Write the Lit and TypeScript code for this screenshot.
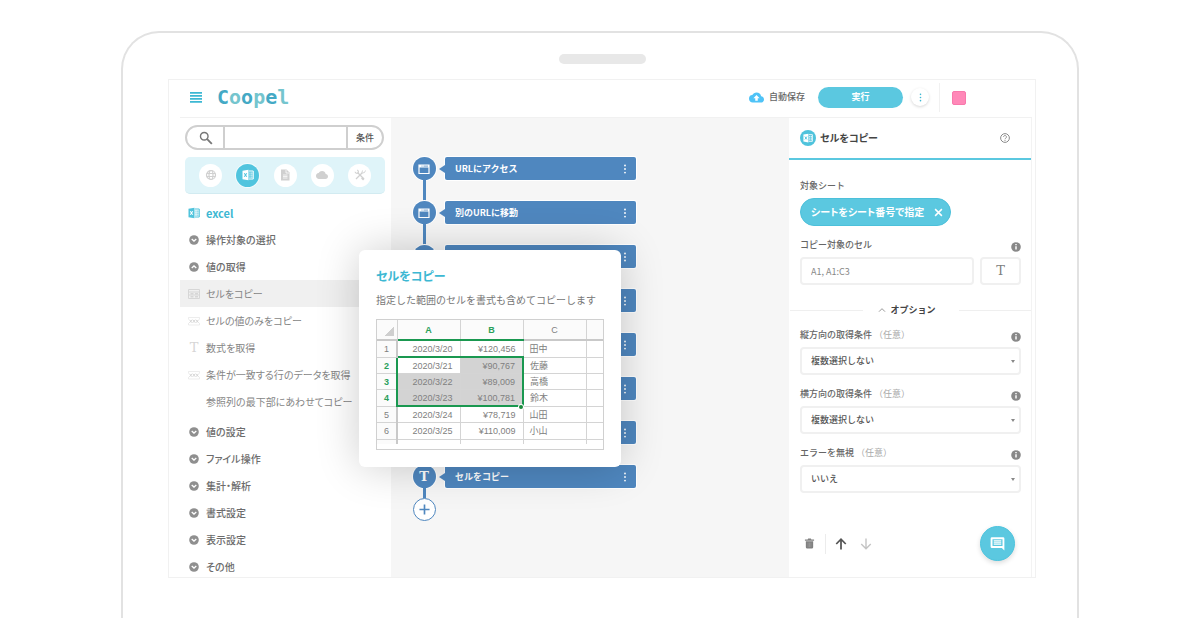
import { LitElement, html, css, svg, nothing } from "lit";
import { customElement, property } from "lit/decorators.js";
import { classMap } from "lit/directives/class-map.js";

const paths: Record<string, unknown> = {
  menu: svg`<path d="M0 2h24v3.500H0zM0 8h24v3.500H0zM0 14h24v3.500H0zM0 20h24v3.500H0z"/>`,
  search: svg`<circle cx="9" cy="9" r="6.5" fill="none" stroke="currentColor" stroke-width="2.4"/><path d="M14 14l8 8" stroke="currentColor" stroke-width="3.2"/>`,
  globe: svg`<g fill="none" stroke="currentColor" stroke-width="2.400"><circle cx="12" cy="12" r="9"/><ellipse cx="12" cy="12" rx="4" ry="9"/><path d="M3.500 9h17M3.500 15h17"/></g>`,
  excel: svg`<path d="M1 3.500L13 1.500v21L1 20.500z"/><path d="M14 4h8.500v16H14" fill="none" stroke="currentColor" stroke-width="2"/><path d="M15 7h2v2.500h-2zM18.500 7h2.500v2.500h-2.500zM15 11h2v2.500h-2zM18.500 11h2.500v2.500h-2.500zM15 15h2v2.500h-2zM18.500 15h2.500v2.500h-2.500z"/><path class="cut" d="M4.500 8.500l5 7M9.500 8.500l-5 7" fill="none" stroke-width="2.200"/>`,
  file: svg`<path d="M4 1h11l6 6v16H4z"/><path d="M14 2v6h6" fill="none" stroke="#fff" stroke-width="1.500"/><path d="M8 12h9M8 15h9M8 18h9" stroke="#fff" stroke-width="1.500"/>`,
  cloud: svg`<path d="M19.350 10.040A7.490 7.490 0 0 0 12 4C9.110 4 6.600 5.640 5.350 8.040A5.994 5.994 0 0 0 0 14c0 3.310 2.690 6 6 6h13c2.760 0 5-2.240 5-5 0-2.640-2.050-4.780-4.650-4.960z"/>`,
  upload: svg`<path fill-rule="evenodd" d="M19.350 10.040A7.490 7.490 0 0 0 12 4C9.110 4 6.600 5.640 5.350 8.040A5.994 5.994 0 0 0 0 14c0 3.310 2.690 6 6 6h13c2.760 0 5-2.240 5-5 0-2.640-2.050-4.780-4.650-4.960zM14 13v4h-4v-4H7l5-5 5 5h-3z"/>`,
  tools: svg`<g fill="none" stroke="currentColor"><path d="M7 7l13 13" stroke-width="2.500"/><path d="M16 8L4 20" stroke-width="2.500"/><path d="M2 5.500a4 4 0 0 0 6 2.500 4 4 0 0 0-1.500-6" stroke-width="2.200"/><path d="M17 3l-1.500 5.500L21 7l2-4" stroke-width="1.800"/><path d="M15.500 17.500l4 4" stroke-width="4"/></g>`,
  down: svg`<circle cx="12" cy="12" r="11.500"/><path d="M6.500 9.500l5.500 5 5.500-5" fill="none" stroke="#fff" stroke-width="3"/>`,
  up: svg`<circle cx="12" cy="12" r="11.500"/><path d="M6.500 14.500l5.500-5 5.500 5" fill="none" stroke="#fff" stroke-width="3"/>`,
  sheet: svg`<path d="M1 3h22v18H1z" fill="none" stroke="currentColor" stroke-width="2"/><path d="M1 8h22M1 14h22" stroke="currentColor" stroke-width="2"/><path d="M5 10h6v3H5zM14 10h6v3h-6zM5 16h6v3H5zM14 16h6v3h-6z"/>`,
  value: svg`<path d="M1 5h22M1 20h22M1 5v4M23 5v4M1 16v4M23 16v4" stroke="currentColor" stroke-width="1.500" stroke-opacity=".6"/><path d="M3 9.500l5 6M8 9.500l-5 6M9.500 9.500l5 6M14.500 9.500l-5 6M16 9.500l5 6M21 9.500l-5 6" stroke="currentColor" stroke-width="2"/>`,
  window: svg`<path d="M2 4h20v17H2z" fill="none" stroke="currentColor" stroke-width="2.400"/><path d="M2 4h20v5H2z"/><path class="cut" d="M7 6.200h2M11 6.200h9" stroke-width="1.600"/>`,
  plus: svg`<path d="M12 1v22M1 12h22" stroke="currentColor" stroke-width="3.600"/>`,
  dots: svg`<circle cx="12" cy="3.500" r="2.200"/><circle cx="12" cy="12" r="2.200"/><circle cx="12" cy="20.500" r="2.200"/>`,
  help: svg`<circle cx="12" cy="12" r="10.500" fill="none" stroke="currentColor" stroke-width="2.400"/><path d="M8.500 9.500a3.500 3.500 0 1 1 5.500 2.800c-1.300 1-2 1.500-2 2.700" fill="none" stroke="currentColor" stroke-width="2.200"/><circle cx="12" cy="18" r="1.400"/>`,
  info: svg`<circle cx="12" cy="12" r="11.500"/><path d="M12 10v8M12 5v3" stroke="#fff" stroke-width="3.500"/>`,
  close: svg`<path d="M3 3l18 18M21 3L3 21" stroke="currentColor" stroke-width="4"/>`,
  caret: svg`<path d="M3 17l9-9 9 9" fill="none" stroke="currentColor" stroke-width="3"/>`,
  trash: svg`<path d="M2 3h6l1-2h6l1 2h6v3H2zM4 7h16v13a3 3 0 0 1-3 3H7a3 3 0 0 1-3-3z"/><path d="M9 10v10M12 10v10M15 10v10" stroke="#fff" stroke-opacity=".35" stroke-width="1"/>`,
  arrowUp: svg`<path d="M12 23V3M2.500 12L12 2.500 21.500 12" fill="none" stroke="currentColor" stroke-width="3.500"/>`,
  arrowDown: svg`<path d="M12 1v20M2.500 12l9.500 9.500 9.500-9.500" fill="none" stroke="currentColor" stroke-width="2.800"/>`,
  chat: svg`<path fill-rule="evenodd" d="M3 2h18a2 2 0 0 1 2 2v19l-4-4H3a2 2 0 0 1-2-2V4a2 2 0 0 1 2-2zm1 3v11h16V5z"/><path fill-opacity=".75" d="M6 6.500h12v2.500H6zM6 9.500h12V12H6zM6 12.500h12v2H6z"/>`,
};

const reset = css`
  * { box-sizing: border-box; }
  button, input, select {
    font: inherit; color: inherit; margin: 0; padding: 0;
    border: 0; background: none; outline: none; border-radius: 0;
  }
  button { cursor: pointer; text-align: left; }
  ul { list-style: none; margin: 0; padding: 0; }
  h1, h2, p { margin: 0; }
`;

@customElement("ui-icon")
class UiIcon extends LitElement {
  @property() name = "";
  static styles = css`
    :host { display: inline-flex; flex: none; width: 12px; height: 12px; }
    svg { width: 100%; height: 100%; fill: currentColor; display: block; }
    .cut { stroke: var(--cut, #fff); }
  `;
  render() {
    return html`<svg viewBox="0 0 24 24" aria-hidden="true">${paths[this.name]}</svg>`;
  }
}

@customElement("app-bar")
class AppBar extends LitElement {
  static styles = [reset, css`
    :host { display: flex; align-items: center; height: 38px; padding-bottom: 3px; border-bottom: 1px solid #f1f1f1; margin-right: 3px; }
    .menu { color: #3db8d3; display: flex; margin: 0 15px 0 10px; }
    .logo { font: bold 20px/24px "DejaVu Sans Mono", monospace; color: #75c5ce; flex: 1; }
    .deep { color: #44a9c5; }
    .cloud { width: 15px; height: 15px; color: #4fc3f7; margin-right: 5px; }
    .saved { color: #666; margin-right: 13px; font-weight: 500; }
    .run { width: 85px; height: 21px; border-radius: 11px; background: #5bc8e0; color: #fff; font-weight: bold; text-align: center; }
    .more { width: 18px; height: 18px; border-radius: 50%; display: flex; align-items: center; justify-content: center;
      color: #3db8d3; box-shadow: 0 1px 3px rgba(0, 0, 0, .16); margin: 0 10px 0 8px; }
    .more ui-icon { width: 9px; height: 9px; }
    .account { border-left: 1px solid #f1f1f1; height: 29px; padding: 2px 66px 0 12px; display: flex; align-items: center; }
    .avatar { width: 14px; height: 14px; border-radius: 2px; background: #ff88b8; border: 1px solid #f879ac; }
  `];
  render() {
    return html`
      <button class="menu" aria-label="メニュー"><ui-icon name="menu"></ui-icon></button>
      <h1 class="logo"><span class="deep">C</span>o<span class="deep">o</span>p<span class="deep">e</span>l</h1>
      <ui-icon class="cloud" name="upload"></ui-icon><span class="saved">自動保存</span>
      <button class="run">実行</button>
      <button class="more" aria-label="その他"><ui-icon name="dots"></ui-icon></button>
      <div class="account"><button class="avatar" aria-label="アカウント"></button></div>`;
  }
}

type Entry = { label: string; icon: string; kind: "group" | "item"; active?: boolean; spaced?: boolean };
const entries: Entry[] = [
  { label: "操作対象の選択", icon: "down", kind: "group" },
  { label: "値の取得", icon: "up", kind: "group" },
  { label: "セルをコピー", icon: "sheet", kind: "item", active: true },
  { label: "セルの値のみをコピー", icon: "value", kind: "item" },
  { label: "数式を取得", icon: "T", kind: "item" },
  { label: "条件が一致する行のデータを取得", icon: "value", kind: "item" },
  { label: "参照列の最下部にあわせてコピー", icon: "", kind: "item" },
  { label: "値の設定", icon: "down", kind: "group", spaced: true },
  { label: "ファイル操作", icon: "down", kind: "group" },
  { label: "集計・解析", icon: "down", kind: "group" },
  { label: "書式設定", icon: "down", kind: "group" },
  { label: "表示設定", icon: "down", kind: "group" },
  { label: "その他", icon: "down", kind: "group" },
];

@customElement("action-sidebar")
class ActionSidebar extends LitElement {
  static styles = [reset, css`
    :host { display: block; padding-top: 7px; overflow: hidden; min-height: 0; }
    .search { display: grid; grid-template-columns: 36px 1fr 34px; height: 25px; margin: 0 7px 0 5px;
      border: 2px solid #cfcfcf; border-radius: 13px; }
    .search label { display: flex; align-items: center; justify-content: center; color: #777; padding-left: 2px; }
    .search label ui-icon { width: 14px; height: 14px; }
    .search input { min-width: 0; border: solid #cfcfcf; border-width: 0 2px; padding: 0 6px; }
    .search button { color: #555; text-align: center; font-weight: 500; }
    .kinds { display: flex; justify-content: space-between; align-items: center; height: 37px; margin: 7px 6px 5px 5px;
      padding: 0 14px; border-radius: 5px; background: #dff4f9; border-bottom: 1px solid #d2ebf1; }
    .kind { width: 23px; height: 23px; border-radius: 50%; background: #fff; color: #d0d0d0; display: flex;
      align-items: center; justify-content: center; }
    .kind.on { background: #50c4de; color: #fff; box-shadow: 0 0 0 1px #f2fbfd; --cut: #50c4de; }
    .row { display: flex; align-items: center; width: 100%; height: 27px; padding-left: 8px; gap: 6px;
      font-size: 10px; white-space: nowrap; font-feature-settings: "palt"; }
    .mark { width: 12px; display: flex; justify-content: center; flex: none; color: #d6d6d6; }
    .group { color: #6c6c6c; font-weight: 500; }
    .group .mark { color: #8f8f8f; }
    .group ui-icon { width: 10px; height: 10px; }
    .item { color: #868686; }
    .active { background: #f0f0f0; }
    .title { color: #3db8d3; font-weight: bold; font-size: 11px; margin: 0; }
    .title .mark { color: #4fc3dc; }
    .spaced { margin-top: 3px; }
    .letter { font: 13px/14px "DejaVu Serif", serif; }
  `];
  render() {
    const kinds = ["globe", "excel", "file", "cloud", "tools"];
    const names = ["ブラウザ", "excel", "ファイル", "クラウド", "ツール"];
    return html`
      <div class="search">
        <label for="q" aria-label="検索"><ui-icon name="search"></ui-icon></label>
        <input id="q" type="text" />
        <button>条件</button>
      </div>
      <div class="kinds">
        ${kinds.map((k, i) => html`<button class=${classMap({ kind: true, on: k === "excel" })} aria-label=${names[i]}><ui-icon name=${k}></ui-icon></button>`)}
      </div>
      <h2 class="row title"><span class="mark"><ui-icon name="excel"></ui-icon></span>excel</h2>
      <ul>
        ${entries.map((e) => html`<li class=${classMap({ spaced: !!e.spaced })}>
          <button class=${classMap({ row: true, [e.kind]: true, active: !!e.active })}>
            <span class="mark">${e.icon === "T" ? html`<span class="letter">T</span>` : e.icon ? html`<ui-icon name=${e.icon}></ui-icon>` : nothing}</span>${e.label}
          </button></li>`)}
      </ul>`;
  }
}

@customElement("action-tip")
class ActionTip extends LitElement {
  static styles = [reset, css`
    :host { display: block; width: 262px; padding: 17px; border-radius: 6px; background: #fff;
      box-shadow: 0 0 44px rgba(0, 0, 0, .2); }
    .name { font-size: 12px; line-height: 18px; color: #3db8d3; font-weight: bold; font-feature-settings: "palt"; }
    .text { font-size: 10px; line-height: 16px; margin: 7px 0 11px; color: #777; white-space: nowrap; }
    .frame { border: 1px solid #d0d0d0; padding-bottom: 5px; }
    .sheet { border-collapse: collapse; table-layout: fixed; width: 100%; height: 124px; border-style: hidden;
      font: 9px/12px "Liberation Sans", "Noto Sans CJK JP", sans-serif; color: #808080; }
    .sheet th, .sheet td { border: 1px solid #d4d4d4; padding: 0; font-weight: normal; }
    .sheet thead th { height: 20px; background: #fbfbfb; border-bottom: 2px solid #c9c9c9; }
    .sheet thead .picked { border-bottom-color: #1a9850; }
    .sheet .picked { color: #2aa05a; font-weight: bold; }
    .sheet tbody th { background: #fbfbfb; border-right: 2px solid #c9c9c9; }
    .sheet tbody .picked { border-right-color: #1a9850; }
    .sheet tbody .blank td, .sheet tbody .blank th { height: 5px; }
    .sheet .num { text-align: right; padding-right: 7px; }
    .sheet .txt { padding-left: 6px; }
    .corner { vertical-align: bottom; }
    .corner::after { content: ""; display: block; margin: 0 3px 3px auto; width: 10px; height: 10px;
      background: linear-gradient(135deg, transparent 50%, #cfcfcf 50%); }
    .sheet .shade { background: #d3d3d3; }
    .sheet .top { border-top: 2px solid #1a9850; }
    .sheet .end { border-bottom: 2px solid #1a9850; }
    .sheet .right { border-right: 2px solid #1a9850; }
    .last { position: relative; }
    .last::after { content: ""; position: absolute; right: -1px; bottom: -4px; width: 4px; height: 4px;
      border-radius: 50%; background: #1a8a3c; box-shadow: 0 0 0 1px #fff; }
  `];
  render() {
    const rows = [
      ["2020/3/20", "¥120,456", "田中"], ["2020/3/21", "¥90,767", "佐藤"], ["2020/3/22", "¥89,009", "高橋"],
      ["2020/3/23", "¥100,781", "鈴木"], ["2020/3/24", "¥78,719", "山田"], ["2020/3/25", "¥110,009", "小山"],
    ];
    return html`
      <h2 class="name">セルをコピー</h2>
      <p class="text">指定した範囲のセルを書式も含めてコピーします</p>
      <div class="frame"><table class="sheet">
        <colgroup><col width="20" /><col width="63" /><col width="63" /><col width="63" /><col width="17" /></colgroup>
        <thead><tr><th class="corner"></th><th class="picked">A</th><th class="picked">B</th><th>C</th><th></th></tr></thead>
        <tbody>
          ${rows.map(([a, b, c], i) => {
            const inside = i >= 1 && i <= 3;
            const edge = { top: i === 1, end: i === 3 };
            return html`<tr>
              <th class=${classMap({ picked: inside })}>${i + 1}</th>
              <td class=${classMap({ num: true, ...edge, shade: inside && i > 1 })}>${a}</td>
              <td class=${classMap({ num: true, ...edge, right: inside, shade: inside, last: i === 3 })}>${b}</td>
              <td class="txt">${c}</td><td></td></tr>`;
          })}
          <tr class="blank"><th></th><td></td><td></td><td></td><td></td></tr>
        </tbody>
      </table></div>`;
  }
}

@customElement("flow-canvas")
class FlowCanvas extends LitElement {
  static styles = [reset, css`
    :host { display: block; position: relative; z-index: 1; background: #f6f6f6; padding: 39px 20px 0 21px; min-width: 0; }
    .flow { max-width: 224px; }
    .step { display: grid; grid-template-columns: 24px 1fr; column-gap: 9px; justify-items: center; }
    .dot { width: 23px; height: 23px; border-radius: 50%; background: #4f87bf; color: #fff; display: flex; align-items: center;
      justify-content: center; box-shadow: 0 0 0 1px #fff; --cut: #4f87bf; }
    .letter { font: bold 13px/16px "DejaVu Serif", serif; }
    .card { width: 100%; height: 23px; display: flex; align-items: center; justify-content: space-between; padding: 0 6px 0 10px;
      background: #4f87bf; color: #fff; border-radius: 2px; box-shadow: 0 0 0 1px #fff; position: relative; font-size: 9px;
      font-weight: bold; }
    .card::before { content: ""; position: absolute; left: -6px; top: 8px; border: solid transparent; border-width: 4px 6px 4px 0;
      border-right-color: #4f87bf; }
    .card ui-icon { width: 10px; height: 10px; }
    .line { width: 3px; height: 21px; background: #4f87bf; }
    .short { height: 10px; }
    .add { width: 23px; height: 23px; border-radius: 50%; border: 1px solid #4f87bf; background: #fff; color: #4f87bf;
      display: flex; align-items: center; justify-content: center; }
    .add ui-icon { width: 11px; height: 11px; }
    .tip { position: absolute; left: -32px; top: 132px; }
  `];
  render() {
    const steps = ["URLにアクセス", "別のURLに移動", "", "", "", "", "", "セルをコピー"];
    return html`
      <ul class="flow">
        ${steps.map((s, i) => html`<li class="step">
          <span class="dot">${i === 7 ? html`<span class="letter">T</span>` : html`<ui-icon name="window"></ui-icon>`}</span>
          <button class="card" aria-label=${s || "操作"}><span>${s}</span><ui-icon name="dots"></ui-icon></button>
          <span class=${classMap({ line: true, short: i === 7 })}></span>
        </li>`)}
        <li class="step"><button class="add" aria-label="追加"><ui-icon name="plus"></ui-icon></button></li>
      </ul>
      <action-tip class="tip"></action-tip>`;
  }
}

@customElement("detail-panel")
class DetailPanel extends LitElement {
  static styles = [reset, css`
    :host { display: flex; flex-direction: column; border-right: 1px solid #f3f3f3; margin-right: 3px; color: #666; min-width: 0; }
    .head { display: flex; align-items: center; height: 42px; padding: 0 21px 0 11px; border-bottom: 2px solid #5bc8e0; }
    .badge { width: 16px; height: 16px; border-radius: 50%; background: #4fc3dc; color: #fff; display: flex; align-items: center;
      justify-content: center; margin-right: 4px; --cut: #4fc3dc; }
    .badge ui-icon { width: 10px; height: 10px; }
    .title { flex: 1; font-size: 10px; font-weight: bold; color: #444; font-feature-settings: "palt"; }
    .help { display: flex; color: #8a8a8a; }
    .help ui-icon { width: 10px; height: 10px; }
    .body { padding: 18px 10px 0 11px; flex: 1; }
    .caption { display: flex; align-items: center; height: 16px; margin-bottom: 4px; font-weight: 500; }
    .caption label, .caption .plain { flex: 1; }
    .caption ui-icon { width: 10px; height: 10px; margin-top: 4px; color: #888; }
    .optional { color: #aaa; font-weight: normal; margin-left: 2px; }
    .chip { display: inline-flex; align-items: center; gap: 10px; height: 28px; border-radius: 14px; padding: 0 7px 0 10px;
      background: #5bc8e0; border: 1px solid #4cc0da; color: #fff; font-size: 10px; font-weight: bold; margin-bottom: 11px;
      font-feature-settings: "palt"; }
    .chip ui-icon { width: 9px; height: 9px; }
    .pair { display: grid; grid-template-columns: 1fr 41px; gap: 6px; }
    .box { height: 28px; width: 100%; border: 2px solid #f0f0f0; border-radius: 4px; padding: 0 9px; min-width: 0; background: #fff; }
    .box::placeholder { color: #888; opacity: 1; }
    .type { text-align: center; font: 13px/16px "DejaVu Serif", serif; color: #808080; }
    .divider { display: flex; align-items: center; gap: 27px; height: 16px; margin: 17px -10px 9px; font-weight: bold; color: #444; }
    .divider::before, .divider::after { content: ""; flex: 1; height: 1px; background: #efefef; }
    .divider button { display: flex; align-items: center; gap: 5px; margin-left: -12px; margin-right: -4px; }
    .divider ui-icon { width: 8px; height: 8px; color: #999; }
    .field { margin-bottom: 11px; }
    .select { display: grid; align-items: center; }
    .select > * { grid-area: 1 / 1; }
    select.box { appearance: none; color: #555; font-weight: 500; }
    .tri { justify-self: end; margin-right: 6px; border: solid transparent; border-width: 3px 2px 0; border-top-color: #888; pointer-events: none; }
    .foot { display: flex; align-items: center; padding: 0 16px 16px 15px; }
    .foot button { display: flex; }
    .trash { color: #808080; padding-right: 10px; }
    .trash ui-icon { width: 11px; height: 11px; }
    .up { border-left: 1px solid #ececec; padding: 4px 0 4px 9px; color: #555; }
    .down { padding-left: 13px; color: #c4c4c4; }
    .foot .chat { margin-left: auto; width: 35px; height: 35px; border-radius: 50%; background: #5bc8e0; color: #fff; align-items: center;
      justify-content: center; box-shadow: 0 2px 5px rgba(0, 0, 0, .14); border: 1px solid #4cc4de; }
    .chat ui-icon { width: 15px; height: 15px; }
  `];
  render() {
    const fields = [["縦方向の取得条件", "複数選択しない"], ["横方向の取得条件", "複数選択しない"], ["エラーを無視", "いいえ"]];
    return html`
      <div class="head">
        <span class="badge"><ui-icon name="excel"></ui-icon></span><h2 class="title">セルをコピー</h2>
        <button class="help" aria-label="ヘルプ"><ui-icon name="help"></ui-icon></button>
      </div>
      <div class="body">
        <div class="caption"><span class="plain">対象シート</span></div>
        <button class="chip">シートをシート番号で指定<ui-icon name="close"></ui-icon></button>
        <div class="caption"><label for="cell">コピー対象のセル</label><ui-icon name="info"></ui-icon></div>
        <div class="pair"><input class="box" id="cell" placeholder="A1, A1:C3" /><button class="box type">T</button></div>
        <div class="divider"><button><ui-icon name="caret"></ui-icon>オプション</button></div>
        ${fields.map(([label, value], i) => html`<div class="field">
          <div class="caption"><label for="f${i}">${label}<span class="optional">（任意）</span></label><ui-icon name="info"></ui-icon></div>
          <div class="select"><select class="box" id="f${i}"><option>${value}</option></select><span class="tri"></span></div>
        </div>`)}
      </div>
      <div class="foot">
        <button class="trash" aria-label="削除"><ui-icon name="trash"></ui-icon></button>
        <button class="up" aria-label="上へ"><ui-icon name="arrowUp"></ui-icon></button>
        <button class="down" aria-label="下へ"><ui-icon name="arrowDown"></ui-icon></button>
        <button class="chat" aria-label="チャット"><ui-icon name="chat"></ui-icon></button>
      </div>`;
  }
}

@customElement("app-root")
class AppRoot extends LitElement {
  static styles = css`
    * { box-sizing: border-box; }
    :host { display: flex; box-sizing: border-box; height: 100vh; overflow: hidden; background: #fff; padding: 31px 121px 0;
      font: 9px/16px "Noto Sans CJK JP", sans-serif; color: #555; }
    .tablet { flex: 1; min-width: 0; display: flex; flex-direction: column; border: 2px solid #e2e2e2; border-bottom: 0;
      border-radius: 38px 38px 0 0; padding: 21px 41px 40px 45px; }
    .speaker { width: 87px; height: 10px; border-radius: 5px; background: #e8e8e8; margin: 0 auto 15px; flex: none; }
    .screen { flex: 1; min-height: 0; display: grid; grid-template: 38px minmax(0, 1fr) / 211px minmax(0, 1fr) 246px;
      border: 1px solid #f1f1f1; padding-left: 11px; }
    .bar { grid-column: 1 / -1; }
  `;
  render() {
    return html`<div class="tablet">
      <div class="speaker"></div>
      <main class="screen">
        <app-bar class="bar"></app-bar>
        <action-sidebar></action-sidebar>
        <flow-canvas></flow-canvas>
        <detail-panel></detail-panel>
      </main>
    </div>`;
  }
}
